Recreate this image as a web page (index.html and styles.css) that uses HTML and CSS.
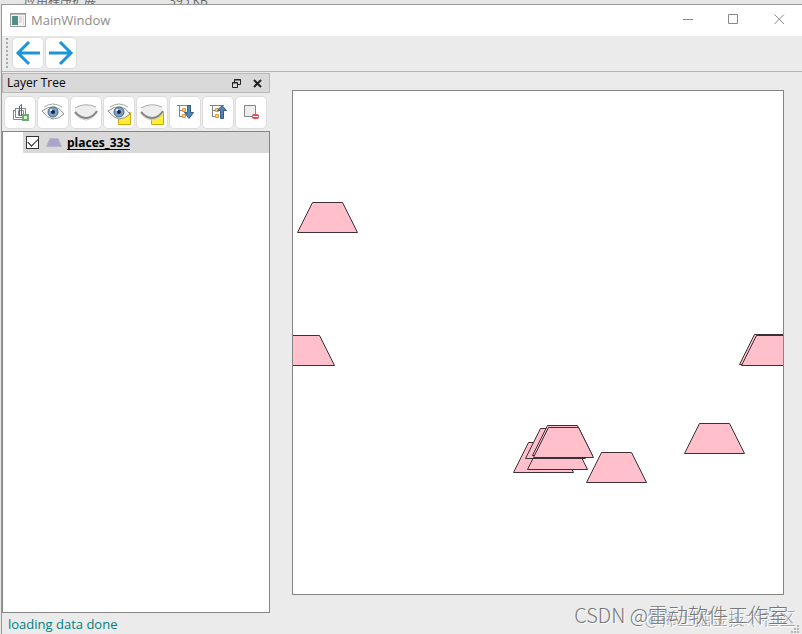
FILE: index.html
```html
<!DOCTYPE html>
<html lang="en">
<head>
<meta charset="utf-8">
<title>MainWindow</title>
<link rel="stylesheet" href="styles.css">
</head>
<body>
<div class="backdrop"><span class="file-type">应用程序扩展</span><span class="file-size">395 KB</span></div>
<main class="window">
  <header class="titlebar">
    <svg class="app-icon" width="16" height="14" viewBox="0 0 16 14"><rect x=".5" y=".5" width="15" height="13" fill="#f4f4f4" stroke="#999"/><path d="M1 1.500H15" stroke="#bbb"/><rect x="2" y="3" width="6" height="9" fill="#4f8f86"/><rect x="9" y="3" width="3" height="7" fill="#ddd"/><rect x="13" y="3" width="1" height="9" fill="#ddd"/></svg>
    <h1>MainWindow</h1>
    <button class="win-btn" aria-label="Minimize"><svg width="11" height="11" viewBox="0 0 11 11"><path d="M1 5.500H11" stroke="#888"/></svg></button>
    <button class="win-btn" aria-label="Maximize"><svg width="11" height="11" viewBox="0 0 11 11"><path d="M.5 .5H9.500V9.500H.5Z" stroke="#888" fill="none"/></svg></button>
    <button class="win-btn" aria-label="Close"><svg width="11" height="11" viewBox="0 0 11 11"><path d="M.5 .5L10 10M10 .5L.5 10" stroke="#888"/></svg></button>
  </header>
  <nav class="toolbar" aria-label="Navigation">
    <span class="grip"></span>
    <button class="tool" aria-label="Back"><svg width="26" height="26" viewBox="0 0 26 26" fill="none" stroke="#1c95d8" stroke-width="3"><path d="M14 2L3 13L14 24M3 13H25"/></svg></button>
    <button class="tool" aria-label="Forward"><svg width="26" height="26" viewBox="0 0 26 26" fill="none" stroke="#1c95d8" stroke-width="3"><path d="M12 2L23 13L12 24M23 13H1"/></svg></button>
  </nav>
  <div class="workspace">
    <section class="dock">
      <div class="dock-title"><h2>Layer Tree</h2>
        <button class="dock-btn" aria-label="Float"><svg width="9" height="9" viewBox="0 0 9 9" fill="none" stroke="#222"><path d="M2.500 3V.5H8.500V5.500H6M2 1H9M.5 3.500H5.500V8.500H.5ZM0 4H6"/></svg></button>
        <button class="dock-btn" aria-label="Close panel"><svg width="9" height="9" viewBox="0 0 9 9" stroke="#222" stroke-width="2"><path d="M1 1L8 8M8 1L1 8"/></svg></button>
      </div>
      <div class="dock-tools">
        <button class="tool" aria-label="Add group"><svg width="24" height="24" viewBox="0 0 24 24" fill="none" stroke="#7d8990"><path d="M5.500 9V18.500H15M5 9.500H8M7.500 7V16.500H17.500V7.500H7.500M10.500 14.500V9.500H15.500V14.500Z"/><path d="M11.500 15V5L13.500 3.500V15" stroke="#3f7396"/><path d="M15 14H20V19H15Z" fill="#d8f3d5" stroke="#6fa96f" stroke-width="2"/></svg></button>
        <button class="tool" aria-label="Show all layers"><svg width="24" height="24" viewBox="0 0 24 24"><use href="#eye"/></svg></button>
        <button class="tool" aria-label="Hide all layers"><svg width="24" height="24" viewBox="0 0 24 24"><use href="#lid"/></svg></button>
        <button class="tool" aria-label="Show selected layers"><svg width="24" height="24" viewBox="0 0 24 24"><path d="M11.500 11.500H23.500V23.500H11.500Z" fill="#ffed38" stroke="#c9aa10"/><use href="#eye"/></svg></button>
        <button class="tool" aria-label="Hide selected layers"><svg width="24" height="24" viewBox="0 0 24 24"><path d="M11.500 11.500H23.500V23.500H11.500Z" fill="#ffed38" stroke="#c9aa10"/><use href="#lid"/></svg></button>
        <button class="tool" aria-label="Expand all"><svg width="24" height="24" viewBox="0 0 24 24"><use href="#tree"/><path d="M14.500 4.500H17.500V11.500H20.500L16 17.500L11.500 11.500H14.500Z" fill="#5182b5" stroke="#345f8d"/></svg></button>
        <button class="tool" aria-label="Collapse all"><svg width="24" height="24" viewBox="0 0 24 24"><use href="#tree"/><path d="M14.500 17.500H17.500V9.500H20.500L16 4.500L11.500 9.500H14.500Z" fill="#5182b5" stroke="#345f8d"/></svg></button>
        <button class="tool" aria-label="Remove layer"><svg width="24" height="24" viewBox="0 0 24 24"><path d="M5.500 4.500H16.500V15.500H5.500Z" fill="#ededed" stroke="#858585"/><rect x="13" y="13" width="7" height="5" rx="2" fill="#df4f57"/><path d="M14 15.500H19" stroke="#fff"/></svg></button>
      </div>
      <div class="tree">
        <label class="layer"><input type="checkbox" checked><svg width="16" height="9" viewBox="0 0 16 9"><path d="M.5 8.500L4 .5H12L15.500 8.500Z" fill="#aaa5cb" stroke="#b9b6ca"/></svg><span>places_33S</span></label>
      </div>
    </section>
    <section class="map" aria-label="Map canvas">
      <svg width="100%" height="100%" viewBox="0 0 490 503" preserveAspectRatio="xMidYMid slice">
        <defs>
          <path id="place" d="M0 30L15 0H45L60 30Z" fill="#ffc0cb" stroke="#3c3034"/>
          <g id="eye"><path d="M1 10Q7 5 14 6Q19 7 23 13Q18 18 12 18Q6 17 1 10Z" fill="#f5f5f3" stroke="#96918e"/><path d="M3 6Q12 0 21 6" fill="none" stroke="#9baf9b"/><circle cx="12" cy="11" r="5" fill="#7da2c8" stroke="#45688f"/><circle cx="12" cy="11" r="2" fill="#17263a"/><circle cx="10" cy="9" r="1" fill="#fff"/></g>
          <g id="lid"><path d="M1 9Q4 4 12 4Q20 4 23 8Q21 15 12 17Q5 16 1 11Z" fill="#ededed"/><path d="M1 7Q11 1 22 6" fill="none" stroke="#aaa"/><path d="M1 11Q6 17 12 17Q19 17 23 10" fill="none" stroke="#858585" stroke-width="2"/><path d="M1 13Q6 19 12 19Q19 18 23 12" fill="none" stroke="#ccc"/></g>
          <g id="tree" fill="none"><path d="M4 4.500H18M6.500 5V16M7 9.500H10M7 15.500H10" stroke="#7e8585"/><path d="M9.500 7.500H12.500V10.500H9.500ZM9.500 13.500H12.500V16.500H9.500Z" fill="#ffd36c" stroke="#df963c"/></g>
        </defs>
        <use href="#place" x="4.500" y="111.500"/><use href="#place" x="-18.500" y="244.500"/>
        <use href="#place" x="446.500" y="243.500"/><use href="#place" x="448.500" y="244.500"/>
        <use href="#place" x="391.500" y="332.500"/><use href="#place" x="293.500" y="361.500"/>
        <use href="#place" x="220.500" y="351.500"/><use href="#place" x="234.500" y="348.500"/>
        <use href="#place" x="232.500" y="337.500"/><use href="#place" x="239.500" y="334.500"/><use href="#place" x="240.500" y="336.500"/>
      </svg>
    </section>
  </div>
  <footer class="status">loading data done</footer>
</main>
<div class="mark mark-community">@稀土掘金技术社区</div>
<div class="mark mark-author">CSDN @雷动软件工作室</div>
<svg class="size-grip" width="9" height="9" viewBox="0 0 9 9" fill="#b5b5b5"><path d="M6 0h2v2h-2ZM3 3h2v2h-2ZM6 3h2v2h-2ZM0 6h2v2h-2ZM3 6h2v2h-2ZM6 6h2v2h-2Z"/></svg>
</body>
</html>
```
FILE: styles.css
```css
* { box-sizing: border-box; }
body {
  margin: 0;
  height: 100vh;
  display: flex;
  flex-direction: column;
  position: relative;
  overflow: hidden;
  background: #e6e6e6;
  color: #000;
  font: 12px/16px "Open Sans", "Noto Sans CJK SC", sans-serif;
}
button { border: 0; padding: 0; background: none; display: flex; align-items: center; justify-content: center; }
h1, h2 { margin: 0; font-size: 12px; font-weight: 400; }
svg { display: block; flex: none; }

.backdrop { height: 4px; overflow: hidden; display: flex; align-items: flex-end; gap: 73px; padding-left: 24px; color: #666; line-height: 14px; }
.backdrop span { margin-bottom: -4px; }
.window { flex: 1; min-height: 0; display: flex; flex-direction: column; margin-left: 1px; border: solid #999; border-width: 1px 0 0 1px; background: #ebebeb; }

.titlebar { height: 31px; display: flex; align-items: center; background: #fff; color: #8c8c8c; padding: 0 0 2px 8px; }
.titlebar h1 { flex: 1; margin-left: 5px; font-size: 13px; }
.win-btn { width: 46px; height: 29px; }

.toolbar { height: 36px; display: flex; align-items: center; gap: 1px; padding: 0 0 1px 4px; border-bottom: 1px solid #b5b5b5; }
.grip { width: 4px; height: 30px; margin-right: 1px; background: radial-gradient(circle at 1px 1px, #aaa 1px, transparent 1px) 0 0 / 4px 4px; }
.tool { width: 32px; height: 32px; background: #fff; border: 1px solid #ddd; border-radius: 5px; }

.workspace { flex: 1; min-height: 0; display: flex; gap: 22px; padding: 1px 18px 0 0; }
.dock { width: 268px; flex: none; display: flex; flex-direction: column; }
.dock-title { height: 20px; display: flex; align-items: center; background: #d9d9d9; border: 1px solid #b8b8b8; padding: 0 6px 0 4px; }
.dock-title h2 { flex: 1; }
.dock-btn { width: 11px; height: 16px; margin-left: 10px; }
.dock-tools { display: flex; gap: 1px; padding: 3px 2px 2px; }
.dock-tools .tool { height: 33px; }
.tree { flex: 1; border: 1px solid #858585; background: #fff; }
.layer { display: flex; align-items: center; height: 21px; margin-left: 20px; padding-left: 3px; background: #d9d9d9; font-weight: 700; }
.layer input { appearance: none; width: 13px; height: 13px; margin: 0 7px 0 0; border: 1px solid #333; background: #fff; display: grid; place-items: center; }
.layer input:checked::before { content: ""; width: 9px; height: 5px; margin-bottom: 4px; border: solid #222; border-width: 0 0 1px 1px; transform: rotate(-45deg); }
.layer span { margin-left: 5px; text-decoration: underline 1px; text-underline-offset: 2px; text-decoration-skip-ink: none; }
.map { flex: 1; min-width: 0; margin: 17px 0 18px; border: 1px solid #858585; background: #fff; overflow: hidden; }

.status { height: 21px; padding: 3px 6px; color: #008080; font-size: 13px; }
.mark { position: absolute; white-space: nowrap; font-family: "Noto Sans CJK SC", sans-serif; font-weight: 300; line-height: 24px; text-shadow: 1px 1px #fff; }
.mark-author { right: 14px; bottom: 7px; font-size: 20px; color: #777; }
.mark-community { right: 6px; bottom: 4px; font-size: 17px; color: #999; }
.size-grip { position: absolute; right: 2px; bottom: 0; }
```
